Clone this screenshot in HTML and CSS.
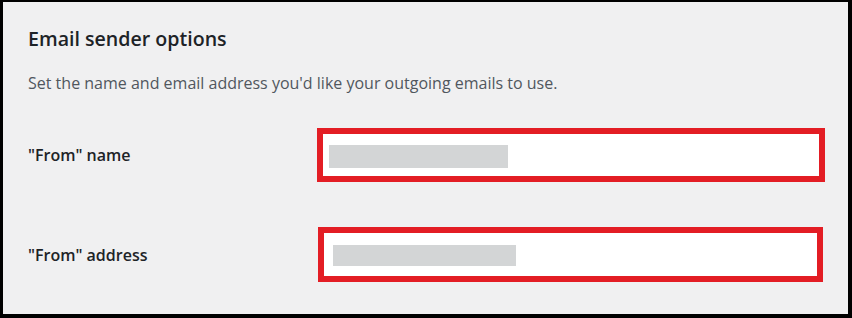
FILE: index.html
```html
<!DOCTYPE html>
<html lang="en">
<head>
    <meta charset="UTF-8">
    <meta name="viewport" content="width=device-width, initial-scale=1.0">
    <title>Email sender options</title>
    <link rel="stylesheet" href="styles.css">
</head>
<body>
    <div class="panel">
        <h2>Email sender options</h2>
        <p class="description">Set the name and email address you'd like your outgoing emails to use.</p>

        <div class="form-row row-name">
            <label class="label">"From" name</label>
            <div class="field">
                <span class="blur"></span>
            </div>
        </div>

        <div class="form-row row-address">
            <label class="label">"From" address</label>
            <div class="field">
                <span class="blur"></span>
            </div>
        </div>
    </div>
</body>
</html>
```

FILE: styles.css
```css
html,
body {
    margin: 0;
    padding: 0;
}

body {
    font-family: "Open Sans", "Noto Sans", sans-serif;
    background: #fff;
}

.panel {
    box-sizing: border-box;
    width: 852px;
    height: 318px;
    background: #f0f0f1;
    border-style: solid;
    border-color: #000;
    border-width: 2px 4px 4px 3px;
    padding: 0 0 0 25px;
    color: #1d2327;
}

h2 {
    margin: 0;
    padding-top: 22px;
    font-size: 19.6px;
    font-weight: 600;
    line-height: 30px;
    color: #1d2327;
}

.description {
    margin: 18px 0 0;
    font-size: 16px;
    line-height: 22px;
    color: #50575e;
}

.form-row {
    display: flex;
    align-items: center;
}

.label {
    width: 289px;
    font-size: 16px;
    font-weight: 600;
    color: #1d2327;
}

.field {
    box-sizing: border-box;
    display: flex;
    align-items: center;
    background: #fff;
    border: 6px solid #e31d24;
}

.blur {
    display: block;
    background: #d3d5d6;
}

.row-name {
    margin-top: 34px;
}

.row-name .field {
    width: 508px;
    height: 54px;
    padding: 3px 0 0 6px;
}

.row-name .blur {
    width: 179px;
    height: 23px;
}

.row-address {
    margin-top: 45px;
}

.row-address .label {
    width: 290px;
}

.row-address .field {
    width: 505px;
    height: 55px;
    padding: 2px 0 0 9px;
}

.row-address .blur {
    width: 183px;
    height: 21px;
}
```
